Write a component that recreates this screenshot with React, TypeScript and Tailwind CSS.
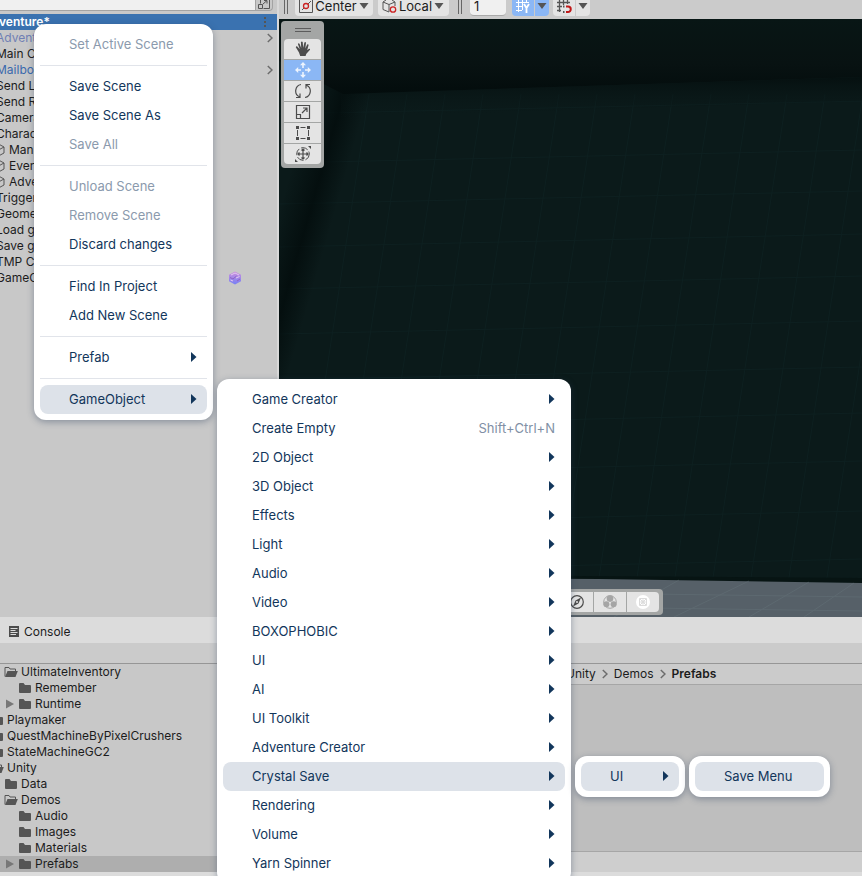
import { type ReactNode } from 'react';

type MenuEntry = {
  label: string;
  disabled?: boolean;
  shortcut?: string;
  arrow?: boolean;
  active?: boolean;
  submenu?: { width: string; entries: MenuEntry[] };
  separatorBefore?: boolean;
};

const SAVE_MENU: MenuEntry[] = [{ label: 'Save Menu', active: true }];

const CRYSTAL_MENU: MenuEntry[] = [
  { label: 'UI', arrow: true, active: true, submenu: { width: 'w-[141px]', entries: SAVE_MENU } },
];

const OBJECT_MENU: MenuEntry[] = [
  { label: 'Game Creator', arrow: true },
  { label: 'Create Empty', shortcut: 'Shift+Ctrl+N' },
  { label: '2D Object', arrow: true },
  { label: '3D Object', arrow: true },
  { label: 'Effects', arrow: true },
  { label: 'Light', arrow: true },
  { label: 'Audio', arrow: true },
  { label: 'Video', arrow: true },
  { label: 'BOXOPHOBIC', arrow: true },
  { label: 'UI', arrow: true },
  { label: 'AI', arrow: true },
  { label: 'UI Toolkit', arrow: true },
  { label: 'Adventure Creator', arrow: true },
  { label: 'Crystal Save', arrow: true, active: true, submenu: { width: 'w-[110px]', entries: CRYSTAL_MENU } },
  { label: 'Rendering', arrow: true },
  { label: 'Volume', arrow: true },
  { label: 'Yarn Spinner', arrow: true },
];

const SCENE_MENU: MenuEntry[] = [
  { label: 'Set Active Scene', disabled: true },
  { label: 'Save Scene', separatorBefore: true },
  { label: 'Save Scene As' },
  { label: 'Save All', disabled: true },
  { label: 'Unload Scene', disabled: true, separatorBefore: true },
  { label: 'Remove Scene', disabled: true },
  { label: 'Discard changes' },
  { label: 'Find In Project', separatorBefore: true },
  { label: 'Add New Scene' },
  { label: 'Prefab', arrow: true, separatorBefore: true },
  {
    label: 'GameObject',
    arrow: true,
    active: true,
    separatorBefore: true,
    submenu: { width: 'w-[354px]', entries: OBJECT_MENU },
  },
];

type HierarchyItem = { label: string; color?: string; cube?: boolean; chevron?: boolean; badge?: boolean };

const HIERARCHY: HierarchyItem[] = [
  { label: 'Advent', color: 'text-[#7080b4]', chevron: true },
  { label: 'Main C' },
  { label: 'Mailbox', color: 'text-[#3b69ad]', chevron: true },
  { label: 'Send L' },
  { label: 'Send R' },
  { label: 'Camera' },
  { label: 'Charac' },
  { label: 'Man', cube: true },
  { label: 'Even', cube: true },
  { label: 'Adve', cube: true },
  { label: 'Trigger' },
  { label: 'Geome' },
  { label: 'Load g' },
  { label: 'Save g' },
  { label: 'TMP C' },
  { label: 'GameO', badge: true },
];

type FolderItem = { label: string; indent: string; open?: boolean; expander?: boolean; selected?: boolean };

const FOLDERS: FolderItem[] = [
  { label: 'UltimateInventory', indent: 'pl-[4px]', open: true },
  { label: 'Remember', indent: 'pl-[18px]' },
  { label: 'Runtime', indent: 'pl-[5px]', expander: true },
  { label: 'Playmaker', indent: '-ml-[10px]' },
  { label: 'QuestMachineByPixelCrushers', indent: '-ml-[10px]' },
  { label: 'StateMachineGC2', indent: '-ml-[10px]' },
  { label: 'Unity', indent: '-ml-[10px]', open: true },
  { label: 'Data', indent: 'pl-[4px]' },
  { label: 'Demos', indent: 'pl-[4px]', open: true },
  { label: 'Audio', indent: 'pl-[18px]' },
  { label: 'Images', indent: 'pl-[18px]' },
  { label: 'Materials', indent: 'pl-[18px]' },
  { label: 'Prefabs', indent: 'pl-[5px]', expander: true, selected: true },
];

function Menu({ entries, width, label }: { entries: MenuEntry[]; width: string; label: string }) {
  return (
    <ul
      role="menu"
      aria-label={label}
      className={`${width} rounded-xl bg-white p-1.5 text-[13px] text-[#12365b] shadow-[0_2px_7px_rgba(40,60,90,0.4)]`}
    >
      {entries.map((entry) => (
        <li key={entry.label} role="none">
          {entry.separatorBefore && <div role="separator" className="my-1.5 h-px bg-[#e1e4ea]" />}
          <div className="relative">
            <button
              role="menuitem"
              disabled={entry.disabled}
              className={`flex h-[29px] w-full items-center justify-between whitespace-nowrap rounded-lg pl-[29px] pr-[10px] ${
                entry.active ? 'bg-[#dde2e9]' : ''
              } ${entry.disabled ? 'text-[#8b9aad]' : ''}`}
            >
              <span>{entry.label}</span>
              {entry.shortcut && <span className="text-[#8190a5]">{entry.shortcut}</span>}
              {entry.arrow && (
                <svg width="6" height="11" viewBox="0 0 6 11" aria-hidden="true">
                  <path d="M0 0L5.5 5L0 10Z" fill="#12365b" />
                </svg>
              )}
            </button>
            {entry.submenu && (
              <div className="absolute -top-1.5 left-full pl-2.5">
                <Menu entries={entry.submenu.entries} width={entry.submenu.width} label={entry.label} />
              </div>
            )}
          </div>
        </li>
      ))}
    </ul>
  );
}

function Chevron() {
  return (
    <svg width="6" height="10" viewBox="0 0 6 10" fill="none" stroke="#6c6c6c" strokeWidth="1.5" aria-hidden="true">
      <path d="M0.8 1L5 5L0.8 9" />
    </svg>
  );
}

function CaretDown() {
  return (
    <svg width="10" height="6" viewBox="0 0 10 6" aria-hidden="true">
      <path d="M0.5 0H9.5L5 6Z" fill="#555" />
    </svg>
  );
}

function FolderIcon({ open }: { open?: boolean }) {
  return (
    <svg width="14" height="12" viewBox="0 0 14 12" className="shrink-0" aria-hidden="true">
      {open ? (
        <>
          <path d="M1 10.5V1.5H5L6 3H11.5V5" fill="none" stroke="#555" />
          <path d="M3.5 5H13.8L11.5 11H1Z" fill="#555" />
        </>
      ) : (
        <path d="M1 2Q1 1 2 1H5.5L7 3H12Q13 3 13 4V10Q13 11 12 11H2Q1 11 1 10Z" fill="#555" />
      )}
    </svg>
  );
}

function CubeIcon() {
  return (
    <svg width="13" height="14" viewBox="0 0 13 14" fill="none" stroke="#555" className="shrink-0" aria-hidden="true">
      <path d="M6.5 1L12 4V10L6.5 13L1 10V4ZM1 4L6.5 7L12 4M6.5 7V13" />
    </svg>
  );
}

function Grip() {
  return <span className="h-[14px] w-1 border-x border-[#666]" />;
}

function Hierarchy() {
  return (
    <section aria-label="Hierarchy" className="flex w-[277px] shrink-0 flex-col overflow-hidden bg-[#c8c8c8]">
      <div className="flex h-[14px] items-start border-b-[3px] border-[#c8c8c8]">
        <input aria-label="Search hierarchy" className="h-[11px] min-w-0 flex-1 border-b border-[#a3a3a3] bg-[#f0f0f0] outline-none" />
        <button aria-label="Open search" className="mr-1 flex h-[11px] w-[18px] items-start justify-center rounded-br border-x border-b border-[#a3a3a3]">
          <svg width="12" height="9" viewBox="0 0 12 9" fill="none" stroke="#555" aria-hidden="true">
            <path d="M2.5 0V3.5M5.5 8.5H11.5V0M0.5 4.5H4.5V8.5H0.5ZM5 4L9 0.5M6 0.5H9V3.5" />
          </svg>
        </button>
      </div>
      <div className="flex h-4 items-center justify-between bg-[#3a72b0] pr-[11px] font-semibold text-white">
        <span className="-ml-px">venture*</span>
        <svg width="2" height="10" viewBox="0 0 2 10" fill="#555" aria-hidden="true">
          <path d="M0 0H2V2H0ZM0 4H2V6H0ZM0 8H2V10H0Z" />
        </svg>
      </div>
      <ul>
        {HIERARCHY.map((item, i) => (
          <li key={i} className={`flex h-4 items-center whitespace-nowrap pr-1 ${item.color ?? ''}`}>
            <span className={`flex flex-1 items-center ${item.cube ? '-ml-2' : '-ml-1'}`}>
              {item.cube && <span className="mr-1"><CubeIcon /></span>}
              {item.label}
            </span>
            {item.chevron && <Chevron />}
            {item.badge && (
              <svg width="14" height="14" viewBox="0 0 14 14" className="mr-[31px]" aria-hidden="true">
                <defs>
                  <linearGradient id="crystal" x1="0" y1="0" x2="0" y2="1">
                    <stop offset="0" stopColor="#cf8fdc" />
                    <stop offset="1" stopColor="#7680f5" />
                  </linearGradient>
                </defs>
                <path d="M7 0.5L13 3.8V10.2L7 13.5L1 10.2V3.8Z" fill="url(#crystal)" />
                <path d="M3 4L7 2L11 4M2.5 9L5 10M8 7L11.5 5.5" fill="none" stroke="#e3c9ee" />
                <path d="M2 6.5L5 8L8.5 5M9 10L12 8" fill="none" stroke="#8f62c4" />
              </svg>
            )}
          </li>
        ))}
      </ul>
    </section>
  );
}

function SceneToolbar() {
  return (
    <div className="flex h-[19px] shrink-0 items-start bg-[#cbcbcb] pl-[5px] text-[13px] leading-3">
      <Grip />
      <button className="ml-[7px] flex h-4 w-[78px] items-start justify-between rounded-b bg-[#e4e4e4] pl-1 pr-1">
        <svg width="14" height="13" viewBox="0 0 14 13" fill="none" aria-hidden="true">
          <path d="M0.5 0V12.5H13.5V0" stroke="#555" />
          <path d="M3 10L5 8M9 4L12 1" stroke="#555" />
          <circle cx="7" cy="6" r="2.5" stroke="#c22" strokeWidth="1.3" />
        </svg>
        <span>Center</span>
        <span className="pt-[3px]"><CaretDown /></span>
      </button>
      <button className="ml-[5px] flex h-4 w-[71px] items-start justify-between rounded-b bg-[#e4e4e4] pl-1 pr-[5px]">
        <svg width="15" height="13" viewBox="0 0 15 13" fill="none" stroke="#555" aria-hidden="true">
          <path d="M7 12L1 9.5V2L4 0M1 2L7 4.5L13 2V6M7 4.5V12M10 0L13 2" />
          <circle cx="11" cy="9.5" r="2.7" fill="#e4e4e4" stroke="#c22" strokeWidth="1.3" />
        </svg>
        <span>Local</span>
        <span className="pt-[3px]"><CaretDown /></span>
      </button>
      <span className="ml-[9px] flex"><Grip /></span>
      <input
        aria-label="Grid size"
        defaultValue="1"
        className="ml-2 h-4 w-9 rounded-b border-b border-[#aaa] bg-[#f0f0f0] pb-1 pl-1 outline-none"
      />
      <div className="ml-1.5 flex h-4 gap-px">
        <button aria-label="Grid snapping" className="flex w-[22px] justify-center rounded-bl bg-[#8bb7f5]">
          <svg width="16" height="14" viewBox="0 0 16 14" fill="none" stroke="#fff" aria-hidden="true">
            <path d="M3.5 0V12M7.5 0V10M11.5 0V3M1 2.5H14M1 6.5H8M1 10.5H7" />
            <path d="M9 4L11.5 8L14 4M11.5 8V13" strokeWidth="1.8" />
          </svg>
        </button>
        <button aria-label="Grid snapping options" className="flex w-[14px] justify-center rounded-br bg-[#8bb7f5] pt-[3px]">
          <CaretDown />
        </button>
      </div>
      <div className="ml-1 flex h-4 gap-px">
        <button aria-label="Increment snapping" className="flex w-[22px] justify-center rounded-bl bg-[#e4e4e4]">
          <svg width="16" height="14" viewBox="0 0 16 14" fill="none" stroke="#555" strokeWidth="1.3" aria-hidden="true">
            <path d="M3.5 0V12M7.5 0V5M11.5 0V4M1 2.5H14M1 6.5H6M1 10.5H5" />
            <path d="M10 6.5H12A2.7 2.7 0 0 1 12 12H10" stroke="#c01818" strokeWidth="2" />
            <path d="M7 6.5H8.5M7 12H8.5" strokeWidth="2" />
          </svg>
        </button>
        <button aria-label="Increment snapping options" className="flex w-[14px] justify-center rounded-br bg-[#e4e4e4] pt-[3px]">
          <CaretDown />
        </button>
      </div>
    </div>
  );
}

const TOOLS: { name: string; icon: ReactNode }[] = [
  {
    name: 'Hand',
    icon: (
      <path
        d="M5.2 15L4 11.5L0.8 6.2Q1 4.8 2.3 5.6L4.8 8.2L2.9 3Q3.4 1.6 4.5 2.8L6.2 7L5.9 1.2Q6.8 0 7.7 1.1L8.2 6.8L9.4 1.4Q10.5 0.4 11 1.8L10.3 7.4L12.2 3.4Q13.4 2.7 13.6 4L12.2 9.3L14 7.8Q15.4 7.6 15 8.8L11.2 13L10.6 15Z"
        fill="#4c4c4c"
        stroke="none"
      />
    ),
  },
  {
    name: 'Move',
    icon: (
      <g stroke="#eef4fd" fill="#eef4fd">
        <path d="M8 2V6M8 10V14M2 8H6M10 8H14" strokeWidth="1.6" />
        <path d="M8 0L11 3.2H5ZM8 16L11 12.8H5ZM0 8L3.2 5V11ZM16 8L12.8 5V11Z" stroke="none" />
      </g>
    ),
  },
  { name: 'Rotate', icon: <path d="M6 1.5A6.5 6.5 0 0 0 4.5 13.8M1 14.5H5V10.5M10 14.5A6.5 6.5 0 0 0 11.5 2.2M15 1.5H11V5.5" strokeWidth="1.2" /> },
  { name: 'Scale', icon: <path d="M1.5 1.5H14.5V14.5H1.5ZM1.5 10.5H5.5V14.5M7 9L12 4M8 4H12V8" strokeWidth="1.2" /> },
  {
    name: 'Rect',
    icon: (
      <>
        <path d="M5.5 2.5H10.5M5.5 13.5H10.5M2.5 5V11M13.5 5V11" />
        <path d="M1 1H4V4H1ZM12 1H15V4H12ZM1 12H4V15H1ZM12 12H15V15H12Z" fill="#4c4c4c" stroke="none" />
      </>
    ),
  },
  {
    name: 'Transform',
    icon: (
      <>
        <circle cx="8" cy="8" r="6.3" strokeDasharray="7 2" />
        <path d="M8 3V13M3 8H13M6.5 4.5L8 3L9.5 4.5M6.5 11.5L8 13L9.5 11.5M4.5 6.5L3 8L4.5 9.5M11.5 6.5L13 8L11.5 9.5" strokeWidth="1.2" />
        <path d="M13 0H16V3ZM0 13V16H3Z" fill="#4c4c4c" stroke="none" />
      </>
    ),
  },
];

function ToolPalette() {
  return (
    <div className="absolute left-[2px] top-[2px] w-[43px] rounded bg-[#a4a6a5] px-[3px] pb-1">
      <div className="flex h-[18px] items-center justify-center">
        <span className="h-1 w-4 border-y border-[#5c5c5c]" />
      </div>
      <div className="flex flex-col gap-px overflow-hidden rounded">
        {TOOLS.map((tool) => (
          <button
            key={tool.name}
            aria-label={tool.name}
            className={`flex h-5 items-center justify-center ${tool.name === 'Move' ? 'bg-[#8bb7f5]' : 'bg-[#e4e4e4]'}`}
          >
            <svg width="16" height="16" viewBox="0 0 16 16" fill="none" stroke="#4c4c4c" aria-hidden="true">
              {tool.icon}
            </svg>
          </button>
        ))}
      </div>
    </div>
  );
}

function ViewOptions() {
  return (
    <div className="absolute bottom-[2px] left-[279px] flex gap-px rounded bg-[#a4a6a5] py-[3px] pl-[3px] pr-1">
      <button aria-label="Orientation" className="flex h-5 w-8 items-center justify-center bg-[#e4e4e4]">
        <svg width="14" height="14" viewBox="0 0 14 14" fill="none" stroke="#4c4c4c" aria-hidden="true">
          <circle cx="7" cy="7" r="6.3" strokeWidth="1.2" />
          <path d="M11 2.5L8.5 8.5L3 11.5L5.5 5.5Z" fill="#4c4c4c" stroke="none" />
          <circle cx="7" cy="7" r="1" fill="#e4e4e4" stroke="none" />
        </svg>
      </button>
      <button aria-label="Probe view" className="flex h-5 w-8 items-center justify-center bg-[#e4e4e4]">
        <svg width="14" height="14" viewBox="0 0 14 14" fill="#a5a5a5" aria-hidden="true">
          <circle cx="7" cy="7" r="6.3" fill="none" stroke="#a5a5a5" />
          <circle cx="7" cy="3.6" r="3.3" />
          <circle cx="3.4" cy="9.2" r="3" />
          <circle cx="10.6" cy="9.2" r="3" />
        </svg>
      </button>
      <button aria-label="Render view" className="flex h-5 w-8 items-center justify-center rounded-r bg-[#e4e4e4]">
        <svg width="14" height="14" viewBox="0 0 14 14" fill="none" aria-hidden="true">
          <circle cx="7" cy="7" r="7" fill="#fff" />
          <path d="M3.5 3.5H10.5V10.5H3.5ZM4 4L10 10M10 4L4 10" stroke="#dcdcdc" />
          <circle cx="7" cy="7" r="2" stroke="#dcdcdc" />
        </svg>
      </button>
    </div>
  );
}

const WALL_COLUMNS = Array.from({ length: 20 }, (_, i) => 90 + i * 38);
const WALL_ROWS = [92, 141, 182, 225, 267, 312, 358, 404, 452, 502, 550];

function SceneView() {
  return (
    <div className="relative flex-1 overflow-hidden bg-[#0b1a1a]">
      <svg viewBox="0 0 583 598" preserveAspectRatio="none" className="absolute inset-0 h-full w-full" aria-hidden="true">
        <defs>
          <linearGradient id="ceiling" x1="0" y1="0" x2="0" y2="1">
            <stop offset="0" stopColor="#081615" />
            <stop offset="0.6" stopColor="#081212" />
            <stop offset="1" stopColor="#030c0c" />
          </linearGradient>
          <linearGradient id="edge" x1="0" y1="0" x2="0" y2="1">
            <stop offset="0" stopColor="#030c0c" stopOpacity="0.7" />
            <stop offset="1" stopColor="#0b1a1a" stopOpacity="0" />
          </linearGradient>
          <linearGradient id="corner" gradientUnits="userSpaceOnUse" x1="5" y1="175" x2="57" y2="190">
            <stop offset="0" stopColor="#020b0b" stopOpacity="0" />
            <stop offset="0.55" stopColor="#020b0b" stopOpacity="0.75" />
            <stop offset="1" stopColor="#020b0b" stopOpacity="0" />
          </linearGradient>
        </defs>
        <g stroke="#12292a" strokeWidth="1" opacity="0.4">
          {WALL_COLUMNS.map((x) => (
            <path key={x} d={`M${x} 75L${x - 75} 565`} />
          ))}
          {WALL_ROWS.map((y) => (
            <path key={y} d={`M0 ${y + 3}L583 ${y - 10}`} />
          ))}
        </g>
        <path d="M0 40H110V560H0Z" fill="url(#corner)" />
        <path d="M62 75L583 58V82L62 99Z" fill="url(#edge)" />
        <path d="M0 0H583V58L64 75L0 42Z" fill="url(#ceiling)" />
        <path d="M0 555L583 559V564L291 561L0 556Z" fill="#071413" />
        <path d="M0 558L320 560L583 564V598H0Z" fill="#566068" />
        <g stroke="#68777d" strokeWidth="1" opacity="0.4">
          <path d="M400 561L335 598M470 562L395 598M530 563L470 598M575 564L525 598M300 574L583 578M300 588L583 592" />
        </g>
      </svg>
      <ToolPalette />
      <ViewOptions />
    </div>
  );
}

function ProjectPanel() {
  return (
    <section aria-label="Project" className="shrink-0 bg-[#dcdcdc]">
      <div className="flex h-[26px] items-center pt-[3px]">
        <button className="flex items-center gap-[5px] pl-[9px]">
          <svg width="10" height="11" viewBox="0 0 10 11" aria-hidden="true">
            <path d="M0 0H10V11H0Z" fill="#4c4c4c" />
            <path d="M1.5 2.5H8.5M1.5 4.5H6.5M1.5 6.5H8.5M1.5 8.5H7" stroke="#dcdcdc" />
          </svg>
          Console
        </button>
      </div>
      <div className="h-[21px] border-b border-[#969696] bg-[#cbcbcb]" />
      <div className="flex">
        <ul className="w-[240px] shrink-0 overflow-hidden bg-[#c8c8c8]">
          {FOLDERS.map((folder) => (
            <li key={folder.label} className={folder.selected ? 'bg-[#aeaeae]' : ''}>
              <div className={`flex h-4 items-center gap-[3px] whitespace-nowrap ${folder.indent}`}>
                {folder.expander && (
                  <svg width="10" height="10" viewBox="0 0 10 10" className="shrink-0" aria-hidden="true">
                    <path d="M1 0.5L9 5L1 9.5Z" fill="#777" />
                  </svg>
                )}
                <FolderIcon open={folder.open} />
                {folder.label}
              </div>
            </li>
          ))}
        </ul>
        <div className="flex min-w-0 flex-1 flex-col">
          <nav aria-label="Breadcrumb" className="flex h-[21px] items-center gap-1.5 border-b border-[#a6a6a6] bg-[#cbcbcb] pl-[326px]">
            <a href="#unity">Unity</a>
            <Chevron />
            <a href="#demos">Demos</a>
            <Chevron />
            <a href="#prefabs" className="font-semibold">Prefabs</a>
          </nav>
          <div className="flex-1 bg-[#bebebe]" />
          <div className="h-[21px] border-t border-[#a6a6a6] bg-[#cecece]" />
        </div>
      </div>
      <div className="h-1" />
    </section>
  );
}

export default function App() {
  return (
    <div className="relative flex h-screen flex-col overflow-hidden bg-[#d8d8d8] font-['Inter',sans-serif] text-xs text-[#1c1c1c]">
      <div className="flex min-h-0 flex-1 gap-[2px]">
        <Hierarchy />
        <section aria-label="Scene" className="flex min-w-0 flex-1 flex-col">
          <SceneToolbar />
          <SceneView />
        </section>
      </div>
      <ProjectPanel />
      <div className="absolute left-[34px] top-6">
        <Menu entries={SCENE_MENU} width="w-[179px]" label="Scene" />
      </div>
    </div>
  );
}
